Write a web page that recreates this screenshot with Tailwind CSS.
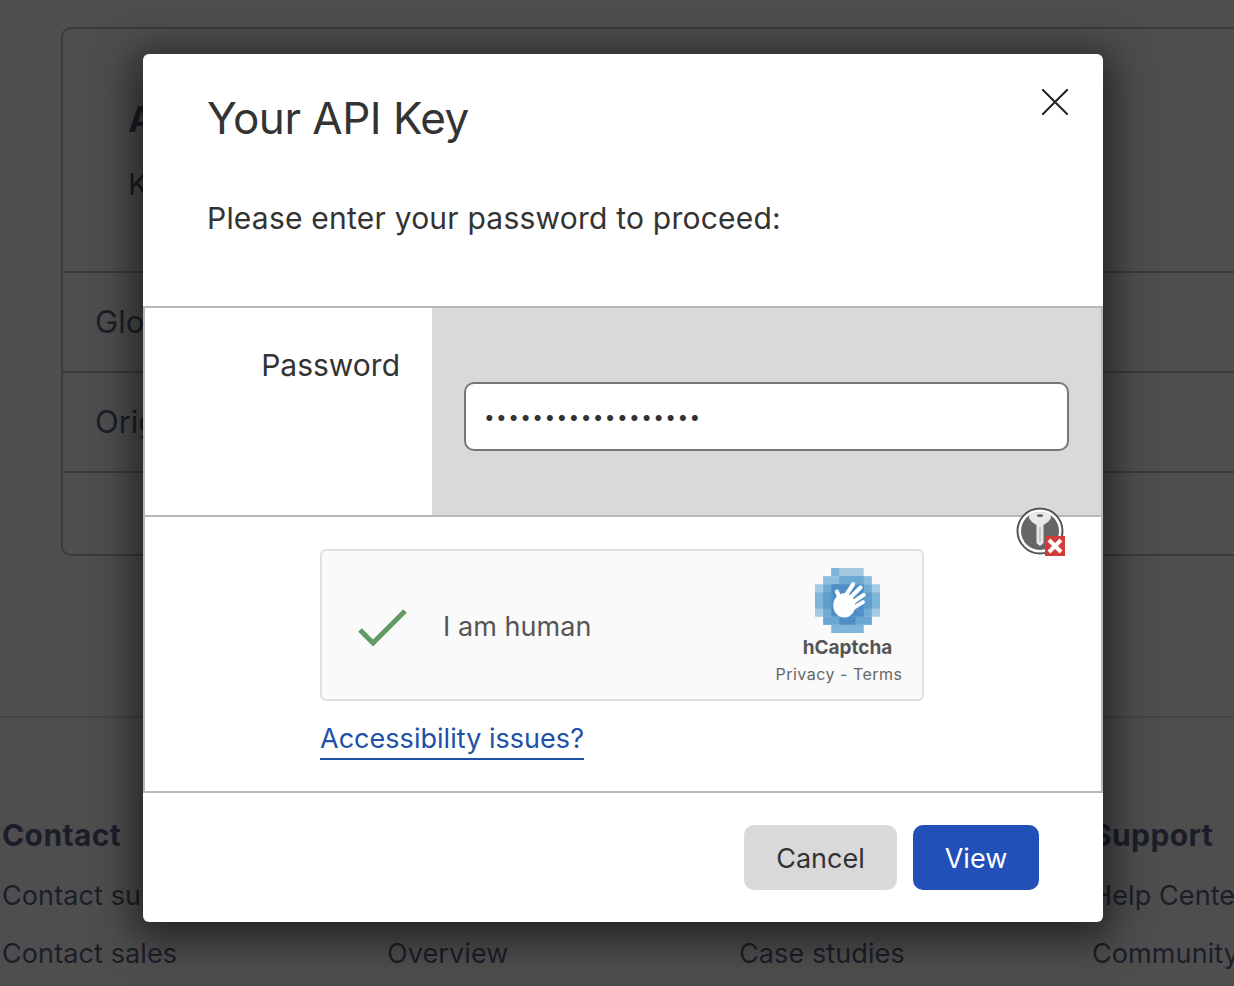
<!DOCTYPE html>
<html lang="en">

<head>
  <meta charset="UTF-8" />
  <meta name="viewport" content="width=device-width, initial-scale=1.0" />
  <title>Your API Key</title>
  <script src="https://cdn.jsdelivr.net/npm/@tailwindcss/browser@4"></script>
</head>

<body class="font-['Inter',sans-serif]">
  <div class="relative w-[1234px] h-[986px] overflow-hidden bg-[#4e4e4e] text-[#1b1e29]">

    <!-- page behind the dialog -->
    <div class="pt-[27px] pl-[61px]">
      <div class="w-[1300px] h-[529px] border-2 border-[#3a3a3a] rounded-[10px] flex flex-col">
        <div class="h-[242px] pl-[65px] pt-[65px]">
          <h2 class="text-[36px] leading-[50px] font-bold">API Tokens</h2>
          <p class="mt-[20px] text-[30px] leading-[40px]">Keys</p>
        </div>
        <div class="h-[100px] border-t-2 border-[#3a3a3a] pl-[32px] flex items-center text-[31px]">Global API Key</div>
        <div class="h-[100px] border-t-2 border-[#3a3a3a] pl-[32px] flex items-center text-[31px]">Origin CA Key</div>
        <div class="flex-1 border-t-2 border-[#3a3a3a]"></div>
      </div>
    </div>
    <footer class="mt-[160px] border-t-2 border-[#444444] pl-[2px] pt-[97px] grid grid-cols-[385px_352px_353px_200px] whitespace-nowrap tracking-[0.1px]">
      <div>
        <h3 class="text-[30px] leading-[40px] font-bold tracking-[0.4px]">Contact</h3>
        <p class="mt-[22px] text-[27px] leading-[38px]">Contact support</p>
        <p class="mt-[20px] text-[27px] leading-[38px]">Contact sales</p>
      </div>
      <div>
        <h3 class="text-[30px] leading-[40px] font-bold tracking-[0.4px]">What we do</h3>
        <p class="mt-[22px] text-[27px] leading-[38px]">Plans</p>
        <p class="mt-[20px] text-[27px] leading-[38px]">Overview</p>
      </div>
      <div>
        <h3 class="text-[30px] leading-[40px] font-bold tracking-[0.4px]">Resources</h3>
        <p class="mt-[22px] text-[27px] leading-[38px]">Documentation</p>
        <p class="mt-[20px] text-[27px] leading-[38px]">Case studies</p>
      </div>
      <div>
        <h3 class="text-[30px] leading-[40px] font-bold tracking-[0.4px]">Support</h3>
        <p class="mt-[22px] text-[27px] leading-[38px]">Help Center</p>
        <p class="mt-[20px] text-[27px] leading-[38px]">Community</p>
      </div>
    </footer>

    <!-- dialog -->
    <div class="absolute left-[143px] top-[54px] w-[960px] h-[868px] bg-white rounded-[6px] shadow-[0_8px_40px_10px_rgba(0,0,0,0.55)] text-[#333333] flex flex-col">
      <div class="h-[252px] px-[64px] pt-[34px] flex flex-col">
        <div class="flex justify-between">
          <h1 class="text-[44px] leading-[60px] tracking-[-0.5px]">Your API Key</h1>
          <button type="button" class="w-[26px] h-[26px] mt-[1px] mr-[-29px]" aria-label="Close">
            <svg class="w-[26px] h-[26px]" viewBox="0 0 26 26" fill="none" stroke="#222222" stroke-width="2">
              <path d="M0 0L26 26M26 0L0 26" />
            </svg>
          </button>
        </div>
        <p class="mt-[48px] text-[30px] leading-[44px] tracking-[0.22px]">Please enter your password to proceed:</p>
      </div>

      <div class="h-[487px] border-2 border-[#b8b8b8] flex flex-col">
        <div class="h-[207px] flex">
          <label class="w-[287px] bg-white pt-[36px] pr-[32px] text-right text-[30px] leading-[42px]">Password</label>
          <div class="flex-1 bg-[#d9d9d9] pl-[32px] pr-[32px] pt-[74px]">
            <input type="password" value="aaaaaaaaaaaaaaaaaa" readonly class="w-full h-[69px] bg-white border-2 border-[#777777] rounded-[10px] px-[18px] pt-[2px] text-[19px] tracking-[1.4px] text-[#333333]" />
          </div>
        </div>
        <div class="flex-1 border-t-2 border-[#b8b8b8] pl-[175px] pt-[32px]">
          <div class="w-[604px] h-[152px] bg-[#fafafa] border-2 border-[#e0e0e0] rounded-[6px] flex items-center">
            <svg class="w-[50px] h-[38px] ml-[36px] mt-[5px]" viewBox="0 0 50 38" fill="none" stroke="#619a62" stroke-width="5">
              <path d="M2 21L15 34L47 2" />
            </svg>
            <span class="ml-[35px] mt-[4px] text-[27px] tracking-[0.05px] text-[#555555]">I am human</span>
            <div class="ml-auto mr-[19px] mt-[2px] w-[128px] flex flex-col items-center">
              <svg class="w-[65px] h-[65px] ml-[17px]" viewBox="0 0 8 8">
                <rect x="2" y="0" width="4" height="1" fill="#a3c8e0" />
                <rect x="2" y="0" width="1" height="1" fill="#7fb5d9" />
                <rect x="1" y="1" width="6" height="1" fill="#8cbddd" />
                <rect x="3" y="1" width="3" height="1" fill="#6ea9d3" />
                <rect x="0" y="2" width="8" height="4" fill="#a3cbe4" />
                <rect x="1" y="2" width="6" height="4" fill="#72acd5" />
                <rect x="2" y="2" width="4" height="4" fill="#4f8fc6" />
                <rect x="0" y="3" width="1" height="2" fill="#7fb5d9" />
                <rect x="7" y="3" width="1" height="2" fill="#7fb5d9" />
                <rect x="1" y="3" width="1" height="2" fill="#5f9dcc" />
                <rect x="6" y="3" width="1" height="2" fill="#5f9dcc" />
                <rect x="1" y="6" width="6" height="1" fill="#6aa7d2" />
                <rect x="3" y="6" width="2" height="1" fill="#4f8fc6" />
                <rect x="2" y="7" width="4" height="1" fill="#7fb5d9" />
                <g fill="none" stroke="#ffffff" stroke-width="0.5" stroke-linecap="round">
                  <path d="M3.2 4L2.7 2.9" />
                  <path d="M3.5 3.8L4.7 2" />
                  <path d="M4 4L5.6 2.4" />
                  <path d="M4.4 4.4L6 3.3" />
                  <path d="M4.6 5L5.9 4.2" />
                </g>
                <ellipse cx="3.6" cy="4.6" rx="1.35" ry="1.5" fill="#ffffff" />
              </svg>
              <span class="ml-[17px] mt-[2px] text-[19px] leading-[26px] font-bold text-[#555555]">hCaptcha</span>
              <span class="mt-[2px] text-[16px] leading-[22px] tracking-[0.5px] text-[#666666]">Privacy - Terms</span>
            </div>
          </div>
          <a href="#" class="inline-block mt-[19px] text-[27px] leading-[38px] tracking-[0.03px] text-[#2050a8] border-b-2 border-[#2050a8]">Accessibility issues?</a>
        </div>
      </div>

      <div class="flex-1 flex justify-end items-start gap-[16px] pt-[32px] pr-[64px]">
        <button type="button" class="w-[153px] h-[65px] pt-[3px] bg-[#d9d9d9] rounded-[10px] text-[27px] text-[#333333]">Cancel</button>
        <button type="button" class="w-[126px] h-[65px] pt-[3px] bg-[#2050b8] rounded-[10px] text-[27px] text-white">View</button>
      </div>
    </div>

    <!-- password manager badge over the field -->
    <svg class="absolute left-[1016px] top-[507px] w-[50px] h-[50px]" viewBox="0 0 50 50">
      <circle cx="24" cy="24" r="22.5" fill="#ffffff" stroke="#555555" stroke-width="2" />
      <circle cx="24" cy="24" r="19" fill="#666666" />
      <path d="M24 5C31 5 35 7 35 10C35 13 31 16 27.5 18V36L24 39L20.5 36V18C17 16 13 13 13 10C13 7 17 5 24 5Z" fill="#e8e8e8" />
      <ellipse cx="24" cy="8.5" rx="3" ry="1.5" fill="#666666" />
      <path d="M24 20V35" stroke="#bdbdbd" stroke-width="1.5" />
      <rect x="29" y="29" width="20" height="20" fill="#d23c38" />
      <path d="M33 33L45 45M45 33L33 45" stroke="#ffffff" stroke-width="4" />
    </svg>
  </div>
</body>

</html>
